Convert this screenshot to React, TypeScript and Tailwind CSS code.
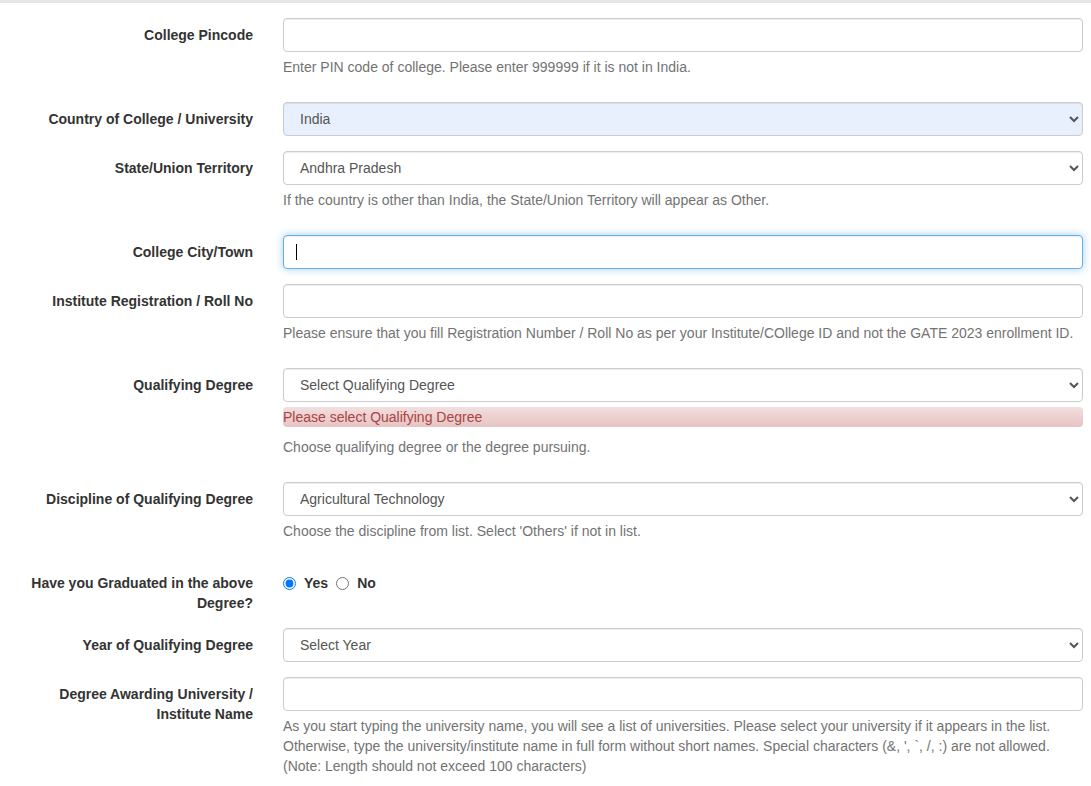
import React from 'react';

const font = { fontFamily: '"Liberation Sans", Arial, sans-serif' };

const baseCls =
  'block h-[34px] w-full rounded-[4px] border px-3 text-[14px] text-[#555] outline-none';
const plainCls = `${baseCls} border-[#ccc] bg-white shadow-[inset_0_1px_1px_rgba(0,0,0,0.075)]`;
const autofillCls = `${baseCls} border-[#ccc] bg-[#e8f0fe] shadow-[inset_0_1px_1px_rgba(0,0,0,0.075)]`;
const focusCls = `${baseCls} border-[#66afe9] bg-white shadow-[inset_0_1px_1px_rgba(0,0,0,0.075),0_0_8px_rgba(102,175,233,0.6)]`;

function Row({
  label,
  children,
  last,
}: {
  label: React.ReactNode;
  children: React.ReactNode;
  last?: boolean;
}) {
  return (
    <div className={`flex ${last ? '' : 'mb-[15px]'}`}>
      <label className="w-[268px] shrink-0 pl-[15px] pr-[15px] pt-[7px] text-right text-[14px] font-bold leading-5 text-[#333]">
        {label}
      </label>
      <div className="min-w-0 flex-1 pl-[15px] pr-[8px]">{children}</div>
    </div>
  );
}

function Help({ children, top = 'mt-[5px]' }: { children: React.ReactNode; top?: string }) {
  return <p className={`mb-[10px] ${top} text-[14px] leading-5 text-[#737373]`}>{children}</p>;
}

function Select({ value, autofill }: { value: string; autofill?: boolean }) {
  return (
    <select defaultValue={value} className={autofill ? autofillCls : plainCls}>
      <option>{value}</option>
    </select>
  );
}

export default function App() {
  return (
    <div className="min-h-[786px] bg-white text-[14px] text-[#333]" style={font}>
      <div className="h-[3px] bg-[#e6e6e6]" />
      <div className="pt-[15px]">
        <Row label="College Pincode">
          <input className={plainCls} />
          <Help>Enter PIN code of college. Please enter 999999 if it is not in India.</Help>
        </Row>

        <Row label="Country of College / University">
          <Select value="India" autofill />
        </Row>

        <Row label="State/Union Territory">
          <Select value="Andhra Pradesh" />
          <Help>If the country is other than India, the State/Union Territory will appear as Other.</Help>
        </Row>

        <Row label="College City/Town">
          <div className="relative">
            <input className={focusCls} />
            <span className="absolute left-[13px] top-[9px] h-[16px] w-px bg-black" />
          </div>
        </Row>

        <Row label="Institute Registration / Roll No">
          <input className={plainCls} />
          <Help>
            Please ensure that you fill Registration Number / Roll No as per your Institute/COllege ID and not the GATE
            2023 enrollment ID.
          </Help>
        </Row>

        <Row label="Qualifying Degree">
          <Select value="Select Qualifying Degree" />
          <div className="mt-[5px] h-5 rounded-[4px] bg-gradient-to-b from-[#f2dede] to-[#e7c3c3] text-[14px] leading-5 text-[#a94442]">
            Please select Qualifying Degree
          </div>
          <Help top="mt-[10px]">Choose qualifying degree or the degree pursuing.</Help>
        </Row>

        <Row label="Discipline of Qualifying Degree">
          <Select value="Agricultural Technology" />
          <Help>Choose the discipline from list. Select 'Others' if not in list.</Help>
        </Row>

        <Row label="Have you Graduated in the above Degree?">
          <div className="flex items-center pt-[7px] text-[14px] font-bold leading-5 text-[#333]">
            <label className="flex items-center">
              <input type="radio" name="grad" defaultChecked className="m-0 h-[13px] w-[13px]" />
              <span className="ml-[8px]">Yes</span>
            </label>
            <label className="ml-[8px] flex items-center">
              <input type="radio" name="grad" className="m-0 h-[13px] w-[13px]" />
              <span className="ml-[8px]">No</span>
            </label>
          </div>
        </Row>

        <Row label="Year of Qualifying Degree">
          <Select value="Select Year" />
        </Row>

        <Row
          label={
            <>
              Degree Awarding University /<br />
              Institute Name
            </>
          }
          last
        >
          <input className={plainCls} />
          <Help>
            As you start typing the university name, you will see a list of universities. Please select your university if
            it appears in the list. Otherwise, type the university/institute name in full form without short names.
            Special characters (&amp;, ', `, /, :) are not allowed. (Note: Length should not exceed 100 characters)
          </Help>
        </Row>
      </div>
    </div>
  );
}
